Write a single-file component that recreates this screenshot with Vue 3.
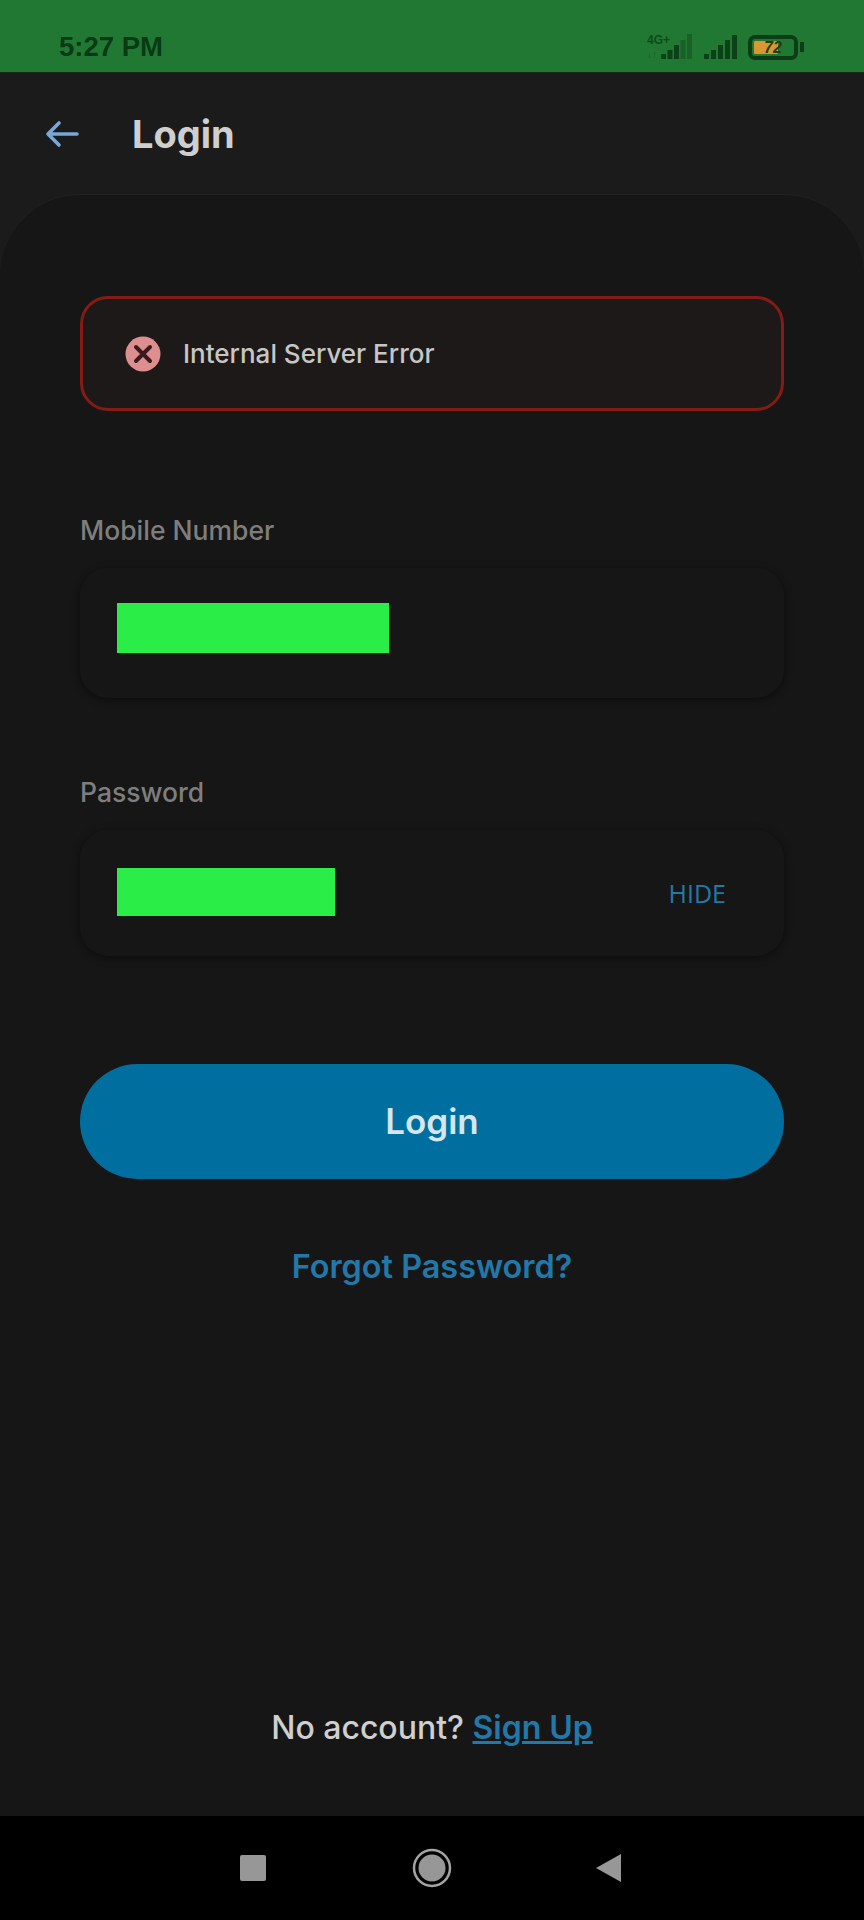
<template>
  <div class="screen">
    <div class="status-bar">
      <span class="time">5:27 PM</span>
      <div class="status-icons">
        <svg class="signal-one" width="48" height="28" viewBox="0 0 48 28">
          <text x="0" y="11" class="net-label">4G+</text>
          <text x="0" y="25" class="net-sub">↓↑</text>
          <g fill="#0c4018">
            <rect x="14" y="21" width="5" height="5" />
            <rect x="20.5" y="17" width="5" height="9" />
            <rect x="27" y="12" width="5" height="14" />
          </g>
          <g fill="#1a6029">
            <rect x="33.5" y="7" width="5" height="19" />
            <rect x="40" y="1" width="5" height="25" />
          </g>
        </svg>
        <svg class="signal-two" width="34" height="26" viewBox="0 0 34 26">
          <g fill="#0c4018">
            <rect x="0" y="20" width="5" height="5" />
            <rect x="7" y="16" width="5" height="9" />
            <rect x="14" y="11" width="5" height="14" />
            <rect x="21" y="6" width="5" height="19" />
            <rect x="28" y="1" width="5" height="24" />
          </g>
        </svg>
        <div class="battery">
          <div class="battery-body">
            <div class="battery-fill" :style="{ width: fillWidth + '%' }"></div>
            <span class="battery-num">{{ battery }}</span>
          </div>
          <div class="battery-cap"></div>
        </div>
      </div>
    </div>

    <div class="app-header">
      <svg class="back" width="36" height="28" viewBox="0 0 36 28" fill="none" stroke="#78a8d6" stroke-width="3.6" stroke-linecap="round" stroke-linejoin="round">
        <path d="M3 14 H32 M14 3 L3 14 L14 25" />
      </svg>
      <h1 class="title">Login</h1>
    </div>

    <div class="card">
      <div class="error-box">
        <svg width="36" height="36" viewBox="0 0 36 36">
          <circle cx="18" cy="18" r="17.5" fill="#dd8e8e" />
          <path d="M11 11 L25 25 M25 11 L11 25" stroke="#3a1a1e" stroke-width="4" stroke-linecap="round" />
        </svg>
        <span>Internal Server Error</span>
      </div>

      <label class="label first">Mobile Number</label>
      <div class="input mobile">
        <span class="redact mobile-redact"></span>
      </div>

      <label class="label second">Password</label>
      <div class="input password">
        <span class="redact pass-redact"></span>
        <span class="hide">HIDE</span>
      </div>

      <button class="login-btn">Login</button>
      <a class="forgot">Forgot Password?</a>

      <p class="signup">No account? <a>Sign Up</a></p>
    </div>

    <div class="nav-bar">
      <svg width="28" height="28" viewBox="0 0 28 28"><rect x="1" y="1" width="26" height="26" rx="2" fill="#979797" /></svg>
      <svg width="40" height="40" viewBox="0 0 40 40">
        <circle cx="20" cy="20" r="18" fill="none" stroke="#a3a3a3" stroke-width="2.5" />
        <circle cx="20" cy="20" r="13.5" fill="#979797" />
      </svg>
      <svg class="nav-back" width="28" height="30" viewBox="0 0 28 30"><path d="M26 1 V29 L1 15 Z" fill="#979797" /></svg>
    </div>
  </div>
</template>

<script setup>
const battery = 72
// the orange part stops short of the real level on this phone
const fillWidth = 62
</script>

<style scoped>
.screen {
  width: 864px;
  height: 1920px;
  display: flex;
  flex-direction: column;
  background: #1b1b1b;
  font-family: "Inter", "Liberation Sans", sans-serif;
  overflow: hidden;
}
.status-bar {
  height: 73px;
  box-sizing: border-box;
  background: #217833;
  display: flex;
  align-items: center;
  justify-content: space-between;
  padding: 22px 60px 0 59px;
  border-bottom: 1px solid #1c2a14;
}
.time {
  font-family: "Liberation Sans", sans-serif;
  font-size: 27.5px;
  font-weight: 700;
  color: #0a3a15;
}
.status-icons {
  display: flex;
  align-items: center;
}
.signal-two {
  margin-left: 9px;
}
.net-label {
  font: 700 12px "Liberation Sans", sans-serif;
  fill: #0f4a1c;
}
.net-sub {
  font: 700 10px "Liberation Sans", sans-serif;
  fill: #1a6029;
}
.battery {
  display: flex;
  align-items: center;
  margin-left: 10px;
}
.battery-body {
  position: relative;
  width: 50px;
  height: 25px;
  box-sizing: border-box;
  border: 4px solid #0c3d17;
  border-radius: 7px;
  padding: 2px;
  display: flex;
}
.battery-fill {
  background: #d89a30;
  border-radius: 1px;
}
.battery-num {
  position: absolute;
  inset: 0;
  text-align: center;
  font: italic 700 16px/17px "Liberation Sans", sans-serif;
  color: #2c3a12;
}
.battery-cap {
  width: 4px;
  height: 10px;
  margin-left: 2px;
  background: #0c3d17;
}
.app-header {
  height: 122px;
  flex-shrink: 0;
  display: flex;
  align-items: center;
  padding: 0 0 0 45px;
  box-sizing: border-box;
}
.title {
  margin: 0 0 0 51px;
  font-size: 38px;
  font-weight: 700;
  color: #cfcfcf;
}
.card {
  flex: 1;
  background: #161616;
  border-radius: 80px 80px 0 0;
  padding: 101px 80px 0;
  display: flex;
  flex-direction: column;
  box-shadow: 0 -1px 0 #202020;
}
.error-box {
  height: 115px;
  box-sizing: border-box;
  border: 3px solid #841b14;
  border-radius: 28px;
  background: #1e1919;
  display: flex;
  align-items: center;
  padding-left: 42px;
  gap: 22px;
  font-size: 26px;
  font-weight: 500;
  color: #c6c6c6;
}
.label {
  font-size: 26.5px;
  font-weight: 500;
  color: #7e7e7e;
  line-height: 36px;
}
.label.first {
  margin-top: 101px;
}
.label.second {
  margin-top: 76px;
}
.input {
  margin-top: 20px;
  background: #161616;
  border-radius: 28px;
  box-shadow: 0 2px 8px rgba(0, 0, 0, 0.45);
  display: flex;
  align-items: center;
  box-sizing: border-box;
  padding-left: 37px;
}
.mobile {
  height: 130px;
}
.password {
  height: 126px;
  justify-content: space-between;
  padding-right: 58px;
}
.redact {
  display: block;
  background: #2aed47;
}
.mobile-redact {
  width: 272px;
  height: 50px;
  margin-top: -11px;
}
.pass-redact {
  width: 218px;
  height: 48px;
  margin-top: -3px;
}
.hide {
  font-family: "Open Sans", sans-serif;
  font-size: 25px;
  font-weight: 500;
  color: #2279a8;
}
.login-btn {
  margin-top: 108px;
  height: 115px;
  flex-shrink: 0;
  border: none;
  border-radius: 58px;
  background: #006f9f;
  color: #d6e6ee;
  font-family: inherit;
  font-size: 35px;
  font-weight: 600;
  padding-bottom: 3px;
}
.forgot {
  margin-top: 66px;
  text-align: center;
  font-size: 32.4px;
  font-weight: 600;
  line-height: 44px;
  color: #2278a8;
}
.signup {
  margin: auto 0 66px;
  text-align: center;
  font-size: 32px;
  line-height: 44px;
  font-weight: 500;
  color: #cfcfcf;
}
.signup a {
  color: #2278a8;
  font-weight: 600;
  text-decoration: underline;
}
.nav-bar {
  height: 104px;
  flex-shrink: 0;
  background: #000;
  display: flex;
  align-items: center;
  padding: 0 0 0 239px;
  gap: 145px;
}
.nav-back {
  margin-left: -2px;
}
</style>

<style>
html, body {
  margin: 0;
  background: #000;
}
</style>
